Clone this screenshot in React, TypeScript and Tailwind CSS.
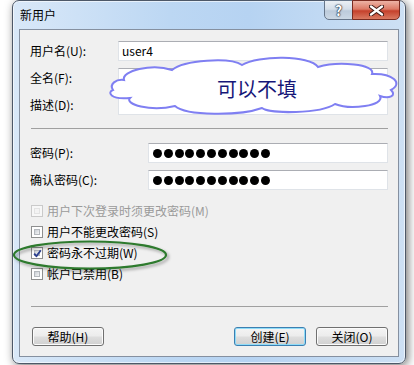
import React from "react";

const font = "font-['Noto_Sans_CJK_SC','Noto_Sans',sans-serif]";

function TextBox({ value, dots }: { value?: string; dots?: number }) {
  return (
    <div className="flex-1 h-[20px] flex items-center pl-[3px] bg-white border border-[#dfe3e8] border-t-[#abadb3]">
      {value && <span className="text-[12px] leading-none">{value}</span>}
      {dots && (
        <div className="flex gap-[1.8px] pl-[1px]">
          {Array.from({ length: dots }).map((_, i) => (
            <span key={i} className="w-[9px] h-[9px] rounded-full bg-black" />
          ))}
        </div>
      )}
    </div>
  );
}

function Field({ label, labelWidth, children }: { label: string; labelWidth: string; children: React.ReactNode }) {
  return (
    <div className="flex items-center h-[20px]">
      <span className={`${labelWidth} shrink-0 leading-none`}>{label}</span>
      {children}
    </div>
  );
}

function CheckBox({ checked, disabled }: { checked?: boolean; disabled?: boolean }) {
  return (
    <span
      className={`relative w-[12px] h-[12px] shrink-0 flex p-[2px] border ${
        disabled ? "border-[#cacaca] bg-[#f7f7f7]" : "border-[#8e8f8f] bg-white"
      }`}
    >
      <span
        className={`flex-1 border ${
          disabled
            ? "border-[#e3e3e3] bg-[#f3f3f3]"
            : "border-[#b4b8bd] bg-[linear-gradient(135deg,#c9ced4,#f5f6f7)]"
        }`}
      />
      {checked && (
        <svg className="absolute left-[1px] top-[1px]" width="9" height="9" viewBox="0 0 9 9">
          <path d="M1.2 4.6 L3.4 7.2 L7.8 1.2" fill="none" stroke="#2b3f8f" strokeWidth="1.9" strokeLinejoin="round" />
        </svg>
      )}
    </span>
  );
}

function Option({ label, checked, disabled }: { label: string; checked?: boolean; disabled?: boolean }) {
  return (
    <div className="flex items-center h-[21px] ml-[1px] gap-[4px]">
      <CheckBox checked={checked} disabled={disabled} />
      <span className={`leading-none ${disabled ? "text-[#9a9a9a]" : ""}`}>{label}</span>
    </div>
  );
}

function Button({ label, primary }: { label: string; primary?: boolean }) {
  return (
    <div
      className={`w-[72px] h-[19px] rounded-[3px] border flex items-center justify-center leading-none bg-[linear-gradient(180deg,#f4f4f4_0%,#ececec_48%,#dedede_52%,#d0d0d0_100%)] ${
        primary
          ? "border-[#3c7fb1] shadow-[inset_0_0_0_1px_#8fdcf8]"
          : "border-[#707070] shadow-[inset_0_0_0_1px_#fbfbfb]"
      }`}
    >
      {label}
    </div>
  );
}

export default function App() {
  return (
    <div className={`relative w-[414px] h-[365px] bg-white overflow-hidden text-[12px] text-black ${font}`}>
      {/* window */}
      <div className="ml-[12px] w-[394px] h-[364px] flex flex-col rounded-[7px] border border-[#4d5868] bg-[linear-gradient(90deg,#d9e8f8_0%,#bcd7f3_40%,#b6d3f2_60%,#cde0f4_100%)] shadow-[2px_2px_10px_rgba(0,0,0,0.55),inset_0_0_0_1px_rgba(255,255,255,0.6)]">
        <div className="h-[28px] flex items-start justify-between pl-[7px] pr-[5px]">
          <span className="mt-[6px] leading-[16px]">新用户</span>
          <div className="flex -mt-px">
            <div className="w-[29px] h-[20px] flex items-center justify-center rounded-bl-[5px] border border-[#66768a] bg-[linear-gradient(180deg,#ebf0f5_0%,#d4dee9_45%,#bccbdb_55%,#cbd8e5_100%)]">
              <span className="text-white font-bold text-[14px] leading-none [text-shadow:0_0_1px_#1e2a3a,0_0_1px_#1e2a3a,0_0_2px_#1e2a3a]">?</span>
            </div>
            <div className="w-[48px] h-[20px] -ml-px flex items-center justify-center rounded-br-[5px] border border-[#7a2b20] bg-[linear-gradient(180deg,#edb3a5_0%,#dc7a66_45%,#c5412c_55%,#d97a62_100%)]">
              <svg width="15" height="11" viewBox="0 0 15 11">
                <path d="M2 1.5 L13 9.5 M13 1.5 L2 9.5" stroke="#3a1712" strokeWidth="4.2" strokeLinecap="round" />
                <path d="M2 1.5 L13 9.5 M13 1.5 L2 9.5" stroke="#ffffff" strokeWidth="2.3" strokeLinecap="round" />
              </svg>
            </div>
          </div>
        </div>

        {/* client area */}
        <div className="flex-1 mx-[6px] mb-[6px] border border-[#8590a0] bg-[#f0f0f0] flex flex-col pt-[11px] pl-[10px] pr-[10px]">
          <Field label="用户名(U):" labelWidth="w-[88px]">
            <TextBox value="user4" />
          </Field>
          <div className="mt-[7px]">
            <Field label="全名(F):" labelWidth="w-[88px]">
              <TextBox />
            </Field>
          </div>
          <div className="mt-[7px]">
            <Field label="描述(D):" labelWidth="w-[88px]">
              <TextBox />
            </Field>
          </div>

          <div className="mt-[13px] ml-[1px] h-px bg-[#a0a0a0]" />

          <div className="mt-[14px]">
            <Field label="密码(P):" labelWidth="w-[118px]">
              <TextBox dots={11} />
            </Field>
          </div>
          <div className="mt-[7px]">
            <Field label="确认密码(C):" labelWidth="w-[118px]">
              <TextBox dots={11} />
            </Field>
          </div>

          <div className="mt-[10px] flex flex-col">
            <Option label="用户下次登录时须更改密码(M)" disabled />
            <Option label="用户不能更改密码(S)" />
            <Option label="密码永不过期(W)" checked />
            <Option label="帐户已禁用(B)" />
          </div>

          <div className="mt-[22px] ml-[1px] h-px bg-[#a0a0a0]" />

          <div className="mt-[20px] flex justify-between pl-[2px]">
            <Button label="帮助(H)" />
            <div className="flex gap-[10px]">
              <Button label="创建(E)" primary />
              <Button label="关闭(O)" />
            </div>
          </div>
        </div>
      </div>

      {/* annotations drawn over the dialog */}
      <svg className="absolute left-0 top-0 pointer-events-none" width="414" height="365" viewBox="0 0 414 365">
        <defs>
          <filter id="sh" x="-10%" y="-40%" width="120%" height="180%">
            <feDropShadow dx="2" dy="2" stdDeviation="1.5" floodColor="#000" floodOpacity="0.35" />
          </filter>
        </defs>
        <path
          d="M113 90 C109 84 116 79 124 80 C121 71 152 63 172 70 C184 60 230 57 242 65 C258 55 310 55 318 67 C338 61 376 64 372 74 C392 73 404 83 391 90 C397 96 389 99 380 96 C385 106 350 110 335 104 C320 114 270 114 262 108 C240 116 186 116 175 106 C150 112 124 104 130 98 C110 100 107 92 113 90 Z"
          fill="#ffffff"
          stroke="#7f7ff2"
          strokeWidth="2"
        />
        <ellipse cx="90" cy="255" rx="76" ry="13.5" fill="none" stroke="#2d7a2d" strokeWidth="2.2" filter="url(#sh)" />
      </svg>
      <span className="absolute left-[217px] top-[79px] text-[20px] leading-[20px] text-[#161678] pointer-events-none">
        可以不填
      </span>
    </div>
  );
}
